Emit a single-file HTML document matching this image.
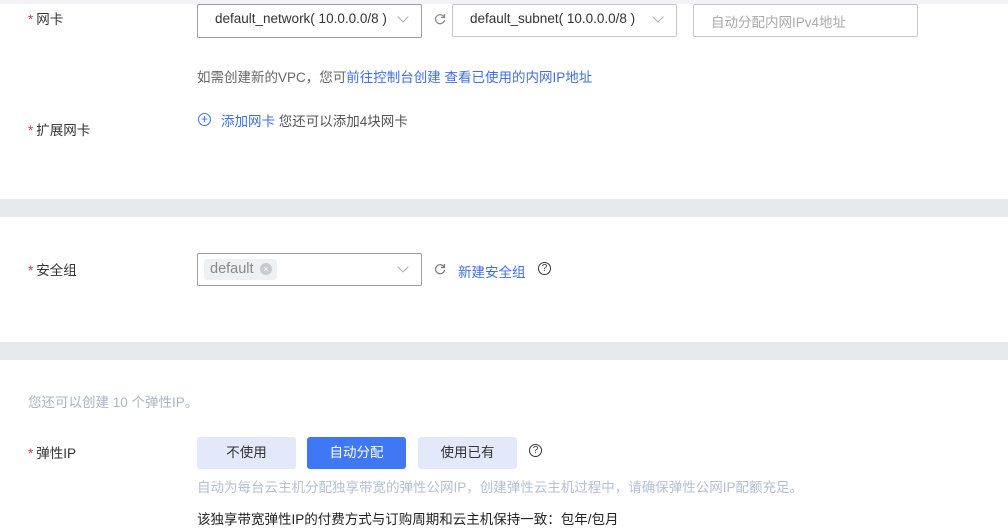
<!DOCTYPE html>
<html><head><meta charset="utf-8"><style>
*{margin:0;padding:0;box-sizing:border-box}
body{width:1008px;height:527px;background:#fff;position:relative;overflow:hidden;font-family:"Liberation Sans","Noto Sans CJK SC",sans-serif;font-size:13.5px;color:#333}
.a{position:absolute;white-space:nowrap}
.lbl{color:#333}
.lbl b{color:#e5393c;font-weight:normal;margin-right:3px}
.box{position:absolute;border:1px solid #9a9ca6;border-radius:2px;background:#fff}
.box.l{border-color:#c5c7ce}
.chev{position:absolute;width:8px;height:8px;border-right:1px solid #aaa;border-bottom:1px solid #aaa;transform:rotate(45deg)}
.band{position:absolute;left:0;width:1008px;height:18px;background:#e8e9ee}
.blue{color:#3f6fe8}
.btn{position:absolute;top:437px;height:32px;width:99px;border-radius:3px;background:#e3e8fa;text-align:center;line-height:32px;color:#333}
.q{position:absolute;width:13px;height:13px;border:1px solid #333;border-radius:50%;font-size:10px;line-height:11px;text-align:center}
</style></head><body>
<div class="a" style="left:0;top:0;width:1008px;height:4px;background:#f3f3f5"></div>
<div class="a lbl" style="left:28px;top:8px"><b>*</b>网卡</div>
<div class="box" style="left:197px;top:4px;width:225px;height:34px"></div>
<div class="a" style="left:215px;top:11px">default_network( 10.0.0.0/8 )</div>
<div class="chev" style="left:399px;top:13px"></div>
<svg class="a" style="left:434px;top:13px" width="12" height="12" viewBox="0 0 12 12"><path d="M10 4A4.5 4.5 0 1 0 10.5 7" fill="none" stroke="#888" stroke-width="1.2"/><path d="M10.5 1v3.5H7" fill="none" stroke="#888" stroke-width="1.2"/></svg>
<div class="box l" style="left:452px;top:4px;width:225px;height:33px"></div>
<div class="a" style="left:470px;top:11px">default_subnet( 10.0.0.0/8 )</div>
<div class="chev" style="left:654px;top:13px"></div>
<div class="box l" style="left:693px;top:4px;width:225px;height:33px"></div>
<div class="a" style="left:711px;top:11px;color:#aaa">自动分配内网IPv4地址</div>
<div class="a" style="left:197px;top:66px;color:#666">如需创建新的VPC，您可<span class="blue">前往控制台创建 查看已使用的内网IP地址</span></div>
<div class="a lbl" style="left:28px;top:119px"><b>*</b>扩展网卡</div>
<div class="a" style="left:198px;top:113px;width:13px;height:13px;border:1px solid #3f6fe8;border-radius:50%;color:#3f6fe8;font-size:12px;line-height:10px;text-align:center">+</div>
<div class="a" style="left:221px;top:110px"><span class="blue">添加网卡</span> <span style="color:#555">您还可以添加4块网卡</span></div>
<div class="band" style="top:199px"></div>
<div class="a lbl" style="left:28px;top:259px"><b>*</b>安全组</div>
<div class="box" style="left:197px;top:253px;width:225px;height:33px"></div>
<div class="a" style="left:204px;top:259px;width:73px;height:21px;background:#eef0f3;border-radius:3px"></div>
<div class="a" style="left:210px;top:261px;color:#888;font-size:14.5px">default</div>
<div class="a" style="left:260px;top:263px;width:12px;height:12px;border-radius:50%;background:#c8cad0;color:#fff;font-size:9px;line-height:12px;text-align:center">×</div>
<div class="chev" style="left:399px;top:263px"></div>
<svg class="a" style="left:434px;top:263px" width="12" height="12" viewBox="0 0 12 12"><path d="M10 4A4.5 4.5 0 1 0 10.5 7" fill="none" stroke="#777" stroke-width="1.2"/><path d="M10.5 1v3.5H7" fill="none" stroke="#777" stroke-width="1.2"/></svg>
<div class="a blue" style="left:458px;top:261px">新建安全组</div>
<div class="q" style="left:538px;top:262px">?</div>
<div class="band" style="top:342px"></div>
<div class="a" style="left:28px;top:391px;color:#aab4c8">您还可以创建 10 个弹性IP。</div>
<div class="a lbl" style="left:28px;top:442px"><b>*</b>弹性IP</div>
<div class="btn" style="left:197px">不使用</div>
<div class="btn" style="left:307px;background:#3f77f5;color:#fff">自动分配</div>
<div class="btn" style="left:418px">使用已有</div>
<div class="q" style="left:529px;top:444px">?</div>
<div class="a" style="left:197px;top:476px;color:#b4bfd6">自动为每台云主机分配独享带宽的弹性公网IP，创建弹性云主机过程中，请确保弹性公网IP配额充足。</div>
<div class="a" style="left:197px;top:508px;color:#222">该独享带宽弹性IP的付费方式与订购周期和云主机保持一致：包年/包月</div>
</body></html>
